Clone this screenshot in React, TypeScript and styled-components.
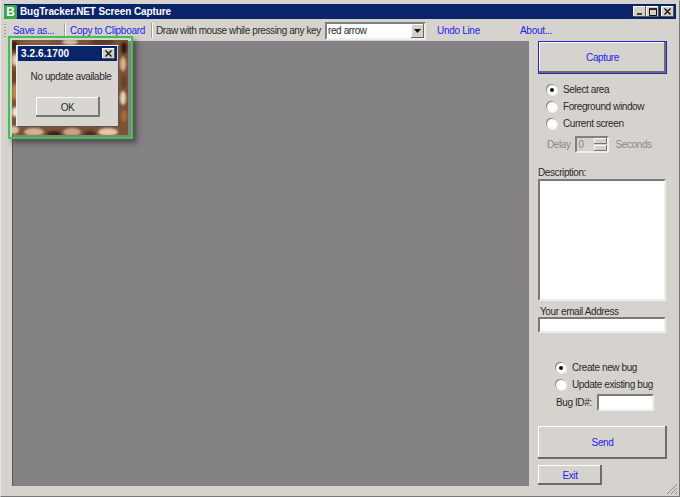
import React from "react";
import styled, { createGlobalStyle } from "styled-components";

const Global = createGlobalStyle`
  html, body { margin: 0; padding: 0; background: #d4d0c8; }
  body { font-family: "Liberation Sans", Arial, sans-serif; font-size: 10px; letter-spacing: -0.4px; color: #2a2a2a; }
`;

const Win = styled.div`
  width: 680px;
  height: 497px;
  box-sizing: border-box;
  padding: 3px 3px 2px;
  background: #d6d3ce;
  border: 1px solid #777;
  border-top-color: #d6d3ce;
  border-left-color: #e8e6e2;
  display: flex;
  flex-direction: column;
  overflow: hidden;
  position: relative;
`;

const TitleBar = styled.div`
  height: 15px;
  background: #0a246a;
  color: #fff;
  display: flex;
  align-items: center;
  font-weight: bold;
  font-size: 10px;
  letter-spacing: -0.1px;
  padding-right: 2px;
  flex-shrink: 0;
`;

const AppLogo = styled.div`
  width: 13px;
  height: 14px;
  background: #39a84c;
  color: #fff;
  font-size: 12px;
  font-weight: bold;
  text-align: center;
  line-height: 14px;
  margin-right: 3px;
  border-radius: 1px;
`;

const TitleText = styled.span`
  flex: 1;
`;

const CaptionBtn = styled.div<{ $gap?: number }>`
  width: 13px;
  height: 11px;
  margin-left: ${(p) => p.$gap ?? 0}px;
  background: #d4d0c8;
  box-shadow: inset -1px -1px #555, inset 1px 1px #fff;
  display: flex;
  align-items: center;
  justify-content: center;
`;

const Toolbar = styled.div`
  height: 21px;
  display: flex;
  align-items: center;
  flex-shrink: 0;
  margin-top: 1px;
`;

const Grip = styled.div`
  width: 2px;
  height: 14px;
  margin: 0 7px 0 0;
  background: repeating-linear-gradient(to bottom, #999 0 1px, transparent 1px 3px);
`;

const LinkText = styled.a<{ $w: number }>`
  color: #2222ee;
  width: ${(p) => p.$w}px;
  white-space: nowrap;
  flex-shrink: 0;
  letter-spacing: -0.3px;
`;

const Sep = styled.div<{ $m: number }>`
  width: 1px;
  height: 15px;
  background: #a5a29c;
  box-shadow: 1px 0 #fff;
  margin-right: ${(p) => p.$m}px;
  flex-shrink: 0;
`;

const Hint = styled.span`
  width: 169px;
  white-space: nowrap;
  flex-shrink: 0;
`;

const Combo = styled.div`
  width: 101px;
  height: 18px;
  box-sizing: border-box;
  background: #fff;
  border: 2px solid;
  border-color: #808080 #eee #eee #808080;
  display: flex;
  align-items: center;
  padding-left: 1px;
  margin-right: 11px;
  flex-shrink: 0;
`;

const ComboText = styled.span`
  flex: 1;
`;

const ComboArrow = styled.div`
  width: 13px;
  height: 14px;
  background: #d4d0c8;
  box-shadow: inset -1px -1px #666, inset 1px 1px #fff;
  display: flex;
  align-items: center;
  justify-content: center;
`;

const Body = styled.div`
  flex: 1;
  display: flex;
  padding-left: 8px;
  min-height: 0;
`;

const Canvas = styled.div`
  width: 517px;
  height: 445px;
  background: #848284;
  border-left: 1px solid #555;
  box-sizing: border-box;
  flex-shrink: 0;
`;

const Side = styled.div`
  margin-left: 9px;
  width: 129px;
  display: flex;
  flex-direction: column;
`;

const Btn = styled.div<{ $h: number; $w?: number; $top?: number; $focus?: boolean }>`
  height: ${(p) => p.$h}px;
  width: ${(p) => p.$w ?? 129}px;
  margin-top: ${(p) => p.$top ?? 0}px;
  box-sizing: border-box;
  flex-shrink: 0;
  display: flex;
  align-items: center;
  justify-content: center;
  color: #2222ee;
  background: #d6d3ce;
  border: ${(p) => (p.$focus ? "1px solid #2222cc" : "0")};
  box-shadow: inset -2px -2px #6f6d69, inset 1px 1px #fff;
`;

const RadioList = styled.div<{ $left: number; $top: number; $h: number }>`
  display: flex;
  flex-direction: column;
  margin: ${(p) => p.$top}px 0 0 ${(p) => p.$left}px;
  row-gap: ${(p) => p.$h - 13}px;
`;

const RadioRow = styled.label`
  display: flex;
  align-items: center;
  height: 13px;
  white-space: nowrap;
`;

const RadioDot = styled.span<{ $on?: boolean }>`
  width: 10px;
  height: 10px;
  border-radius: 50%;
  background: #fff;
  box-shadow: -1px -1px 0 #8a8884, 1px 1px 0 #eee;
  margin-right: 6px;
  display: flex;
  align-items: center;
  justify-content: center;
  flex-shrink: 0;
  &::after {
    content: "";
    display: ${(p) => (p.$on ? "block" : "none")};
    width: 4px;
    height: 4px;
    border-radius: 50%;
    background: #111;
  }
`;

const DelayRow = styled.div`
  display: flex;
  align-items: center;
  margin: 6px 0 0 9px;
  height: 17px;
  color: #8b8985;
`;

const Spin = styled.div`
  width: 34px;
  height: 17px;
  box-sizing: border-box;
  margin: 0 7px 0 4px;
  border: 2px solid;
  border-color: #808080 #eee #eee #808080;
  display: flex;
  align-items: center;
  padding-left: 2px;
`;

const SpinVal = styled.span`
  flex: 1;
`;

const SpinBtns = styled.div`
  width: 13px;
  height: 13px;
  display: flex;
  flex-direction: column;
  gap: 1px;
`;

const SpinBtn = styled.div`
  flex: 1;
  background: #d4d0c8;
  box-shadow: inset -1px -1px #777, inset 1px 1px #fff;
`;

const FieldLabel = styled.div<{ $top: number; $left?: number; $h?: number }>`
  margin: ${(p) => p.$top}px 0 0 ${(p) => p.$left ?? 0}px;
  line-height: 12px;
  height: ${(p) => p.$h ?? 12}px;
`;

const Sunken = styled.div<{ $h: number; $w?: number; $top?: number }>`
  height: ${(p) => p.$h}px;
  width: ${(p) => p.$w ?? 128}px;
  margin-top: ${(p) => p.$top ?? 0}px;
  box-sizing: border-box;
  background: #fff;
  border: 2px solid;
  border-color: #7c7a76 #eee #eee #7c7a76;
  flex-shrink: 0;
`;

const BugIdRow = styled.div`
  display: flex;
  align-items: center;
  justify-content: space-between;
  width: 98px;
  margin: 3px 0 0 18px;
`;

const Grabber = styled.svg`
  position: absolute;
  right: 1px;
  bottom: 1px;
`;

const Overlay = styled.div`
  position: absolute;
  left: 7px;
  top: 35px;
  width: 125px;
  height: 103px;
  box-sizing: border-box;
  border: 2px solid #3fc24f;
  box-shadow: 4px 4px 5px rgba(40, 40, 40, 0.55);
  padding: 2px 3px 2px 2px;
`;

const Photo = styled.div`
  height: 100%;
  position: relative;
  overflow: hidden;
`;

const PhotoArt = styled.svg`
  display: block;
`;

const Dialog = styled.div`
  position: absolute;
  left: 4px;
  top: 5px;
  width: 103px;
  height: 82px;
  box-sizing: border-box;
  background: #d9d6d1;
  border: 1px solid;
  border-color: #eee #555 #555 #eee;
  padding: 0 1px;
  display: flex;
  flex-direction: column;
  align-items: center;
`;

const DlgTitle = styled.div`
  align-self: stretch;
  height: 15px;
  background: #0a246a;
  color: #fff;
  font-weight: bold;
  letter-spacing: 0.1px;
  font-size: 10px;
  display: flex;
  align-items: center;
  justify-content: space-between;
  padding: 0 2px 0 3px;
`;

const DlgMsg = styled.div`
  margin: 10px 0 0 7px;
  line-height: 12px;
  white-space: nowrap;
`;

const DlgOk = styled.div`
  margin-top: 14px;
  width: 64px;
  height: 20px;
  display: flex;
  align-items: center;
  justify-content: center;
  box-shadow: inset -2px -2px #777, inset 1px 1px #fff;
`;

const CloseGlyph = ({ size = 7 }: { size?: number }) => (
  <svg width={size} height={size} viewBox="0 0 7 7">
    <path d="M0.5 0.5 L6.5 6.5 M6.5 0.5 L0.5 6.5" stroke="#111" strokeWidth="1.4" />
  </svg>
);

// painting behind the update dialog, only its rim shows
const blobs: [number, number, number, number, string][] = [
  [2, 6, 4, 5, "#3d2417"],
  [3, 20, 3, 6, "#e6d3ba"],
  [2, 36, 3, 6, "#6d3d20"],
  [3, 52, 3, 8, "#c08848"],
  [3, 72, 3, 5, "#efe4d4"],
  [2, 90, 5, 4, "#d9c0a0"],
  [25, 2, 14, 3, "#8a5f40"],
  [58, 2, 8, 3, "#cbbcaa"],
  [90, 2, 12, 3, "#5a3826"],
  [112, 8, 3, 6, "#2f1a10"],
  [111, 24, 3, 7, "#d8b48c"],
  [112, 42, 3, 6, "#6a3f24"],
  [111, 58, 3, 7, "#e4d2bc"],
  [112, 76, 3, 6, "#a86c3c"],
  [22, 92, 10, 4, "#d3b292"],
  [42, 94, 7, 3, "#3a2418"],
  [60, 92, 9, 4, "#c9a27e"],
  [78, 94, 6, 3, "#4a2e1e"],
  [96, 92, 10, 4, "#e2c8aa"],
];

export default function App() {
  return (
    <>
      <Global />
      <Win>
        <TitleBar>
          <AppLogo>B</AppLogo>
          <TitleText>BugTracker.NET Screen Capture</TitleText>
          <CaptionBtn>
            <svg width="7" height="7" viewBox="0 0 7 7">
              <path d="M1 6 H6" stroke="#111" strokeWidth="1.5" />
            </svg>
          </CaptionBtn>
          <CaptionBtn>
            <svg width="8" height="8" viewBox="0 0 8 8">
              <path d="M0.5 1 H7.5 V7.5 H0.5 Z" fill="none" stroke="#111" />
              <path d="M0 1 H8" stroke="#111" strokeWidth="1.5" />
            </svg>
          </CaptionBtn>
          <CaptionBtn $gap={2}>
            <CloseGlyph />
          </CaptionBtn>
        </TitleBar>
        <Toolbar>
          <Grip />
          <LinkText $w={51}>Save as...</LinkText>
          <Sep $m={5} />
          <LinkText $w={81}>Copy to Clipboard</LinkText>
          <Sep $m={4} />
          <Hint>Draw with mouse while pressing any key</Hint>
          <Combo>
            <ComboText>red arrow</ComboText>
            <ComboArrow>
              <svg width="7" height="4" viewBox="0 0 7 4">
                <path d="M0 0 H7 L3.5 4 Z" fill="#111" />
              </svg>
            </ComboArrow>
          </Combo>
          <LinkText $w={83}>Undo Line</LinkText>
          <LinkText $w={40}>About...</LinkText>
        </Toolbar>
        <Body>
          <Canvas />
          <Side>
            <Btn $h={33} $focus>Capture</Btn>
            <RadioList $left={9} $top={9} $h={17}>
              <RadioRow><RadioDot $on />Select area</RadioRow>
              <RadioRow><RadioDot />Foreground window</RadioRow>
              <RadioRow><RadioDot />Current screen</RadioRow>
            </RadioList>
            <DelayRow>
              Delay
              <Spin>
                <SpinVal>0</SpinVal>
                <SpinBtns>
                  <SpinBtn />
                  <SpinBtn />
                </SpinBtns>
              </Spin>
              Seconds
            </DelayRow>
            <FieldLabel $top={14}>Description:</FieldLabel>
            <Sunken $h={122} />
            <FieldLabel $top={5} $left={2} $h={11}>Your email Address</FieldLabel>
            <Sunken $h={16} />
            <RadioList $left={18} $top={28} $h={17}>
              <RadioRow><RadioDot $on />Create new bug</RadioRow>
              <RadioRow><RadioDot />Update existing bug</RadioRow>
            </RadioList>
            <BugIdRow>
              Bug ID#:
              <Sunken $h={17} $w={57} />
            </BugIdRow>
            <Btn $h={33} $top={15}>Send</Btn>
            <Btn $h={20} $w={64} $top={6}>Exit</Btn>
          </Side>
        </Body>
        <Grabber width="12" height="12" viewBox="0 0 12 12">
          <path d="M11 1 L1 11 M11 5 L5 11 M11 9 L9 11" stroke="#8a8884" strokeWidth="1" />
        </Grabber>
        <Overlay>
          <Photo>
            <PhotoArt width="116" height="95" viewBox="0 0 116 95">
              <defs>
                <filter id="soft">
                  <feGaussianBlur stdDeviation="1" />
                </filter>
              </defs>
              <rect width="116" height="95" fill="#7a5238" />
              <g filter="url(#soft)">
                {blobs.map(([cx, cy, rx, ry, fill], i) => (
                  <ellipse key={i} cx={cx} cy={cy} rx={rx} ry={ry} fill={fill} />
                ))}
              </g>
            </PhotoArt>
            <Dialog>
              <DlgTitle>
                3.2.6.1700
                <CaptionBtn>
                  <CloseGlyph />
                </CaptionBtn>
              </DlgTitle>
              <DlgMsg>No update available</DlgMsg>
              <DlgOk>OK</DlgOk>
            </Dialog>
          </Photo>
        </Overlay>
      </Win>
    </>
  );
}
